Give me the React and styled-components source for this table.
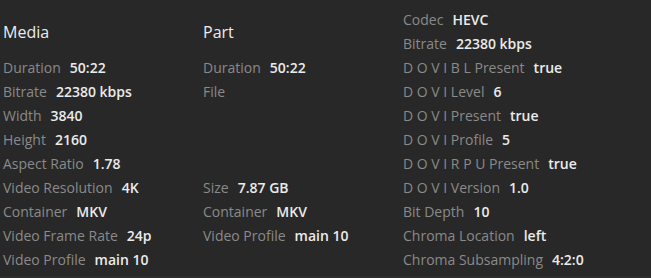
import React from "react";
import styled, { createGlobalStyle } from "styled-components";

const media = [
  ["Duration", "50:22"],
  ["Bitrate", "22380 kbps"],
  ["Width", "3840"],
  ["Height", "2160"],
  ["Aspect Ratio", "1.78"],
  ["Video Resolution", "4K"],
  ["Container", "MKV"],
  ["Video Frame Rate", "24p"],
  ["Video Profile", "main 10"],
];

const part = [
  ["Duration", "50:22"],
  ["File", "", 4],
  ["Size", "7.87 GB"],
  ["Container", "MKV"],
  ["Video Profile", "main 10"],
];

const stream = [
  ["Codec", "HEVC"],
  ["Bitrate", "22380 kbps"],
  ["D O V I B L Present", "true"],
  ["D O V I Level", "6"],
  ["D O V I Present", "true"],
  ["D O V I Profile", "5"],
  ["D O V I R P U Present", "true"],
  ["D O V I Version", "1.0"],
  ["Bit Depth", "10"],
  ["Chroma Location", "left"],
  ["Chroma Subsampling", "4:2:0"],
];

const App = () => {
  // Return -------------------------------------------------------------------

  return (
    <>
      <GlobalStyle />
      <StyledPanel>
        <Column>
          <Heading>Media</Heading>
          {media.map(([label, value]) => (
            <Row key={label}>
              <Label>{label}</Label>
              <Value>{value}</Value>
            </Row>
          ))}
        </Column>
        <Column>
          <Heading>Part</Heading>
          {part.map(([label, value, span]) => (
            <Row key={label} $span={span}>
              <Label>{label}</Label>
              <Value>{value}</Value>
            </Row>
          ))}
        </Column>
        <Column>
          {stream.map(([label, value]) => (
            <Row key={label}>
              <Label>{label}</Label>
              <Value>{value}</Value>
            </Row>
          ))}
        </Column>
      </StyledPanel>
    </>
  );
  // --------------------------------------------------------------------------
};

// Styled Component -----------------------------------------------------------

const GlobalStyle = createGlobalStyle`
  html, body {
    margin: 0;
    background: #2d2d2d;
  }
  body {
    font-family: "Open Sans", "Liberation Sans", sans-serif;
  }
`;

const StyledPanel = styled.section`
  display: grid;
  grid-template-columns: 200px 200px 1fr;
  height: 276px;
  padding: 8px 0 0 3px;
  box-sizing: border-box;
  background: #282828;
  overflow: hidden;
`;

const Column = styled.div`
  display: flex;
  flex-direction: column;
`;

const Heading = styled.h2`
  margin: 0;
  height: 48px;
  line-height: 48px;
  font-size: 16px;
  font-weight: 500;
  color: #ececec;
`;

const Row = styled.div`
  display: flex;
  align-items: flex-start;
  gap: 9px;
  height: ${({ $span }) => ($span || 1) * 24}px;
  line-height: 24px;
  font-size: 14px;
  white-space: nowrap;
`;

const Label = styled.span`
  color: #8a8a8a;
`;

const Value = styled.span`
  color: #ebebeb;
  font-weight: 600;
`;
// ----------------------------------------------------------------------------

export default App;
